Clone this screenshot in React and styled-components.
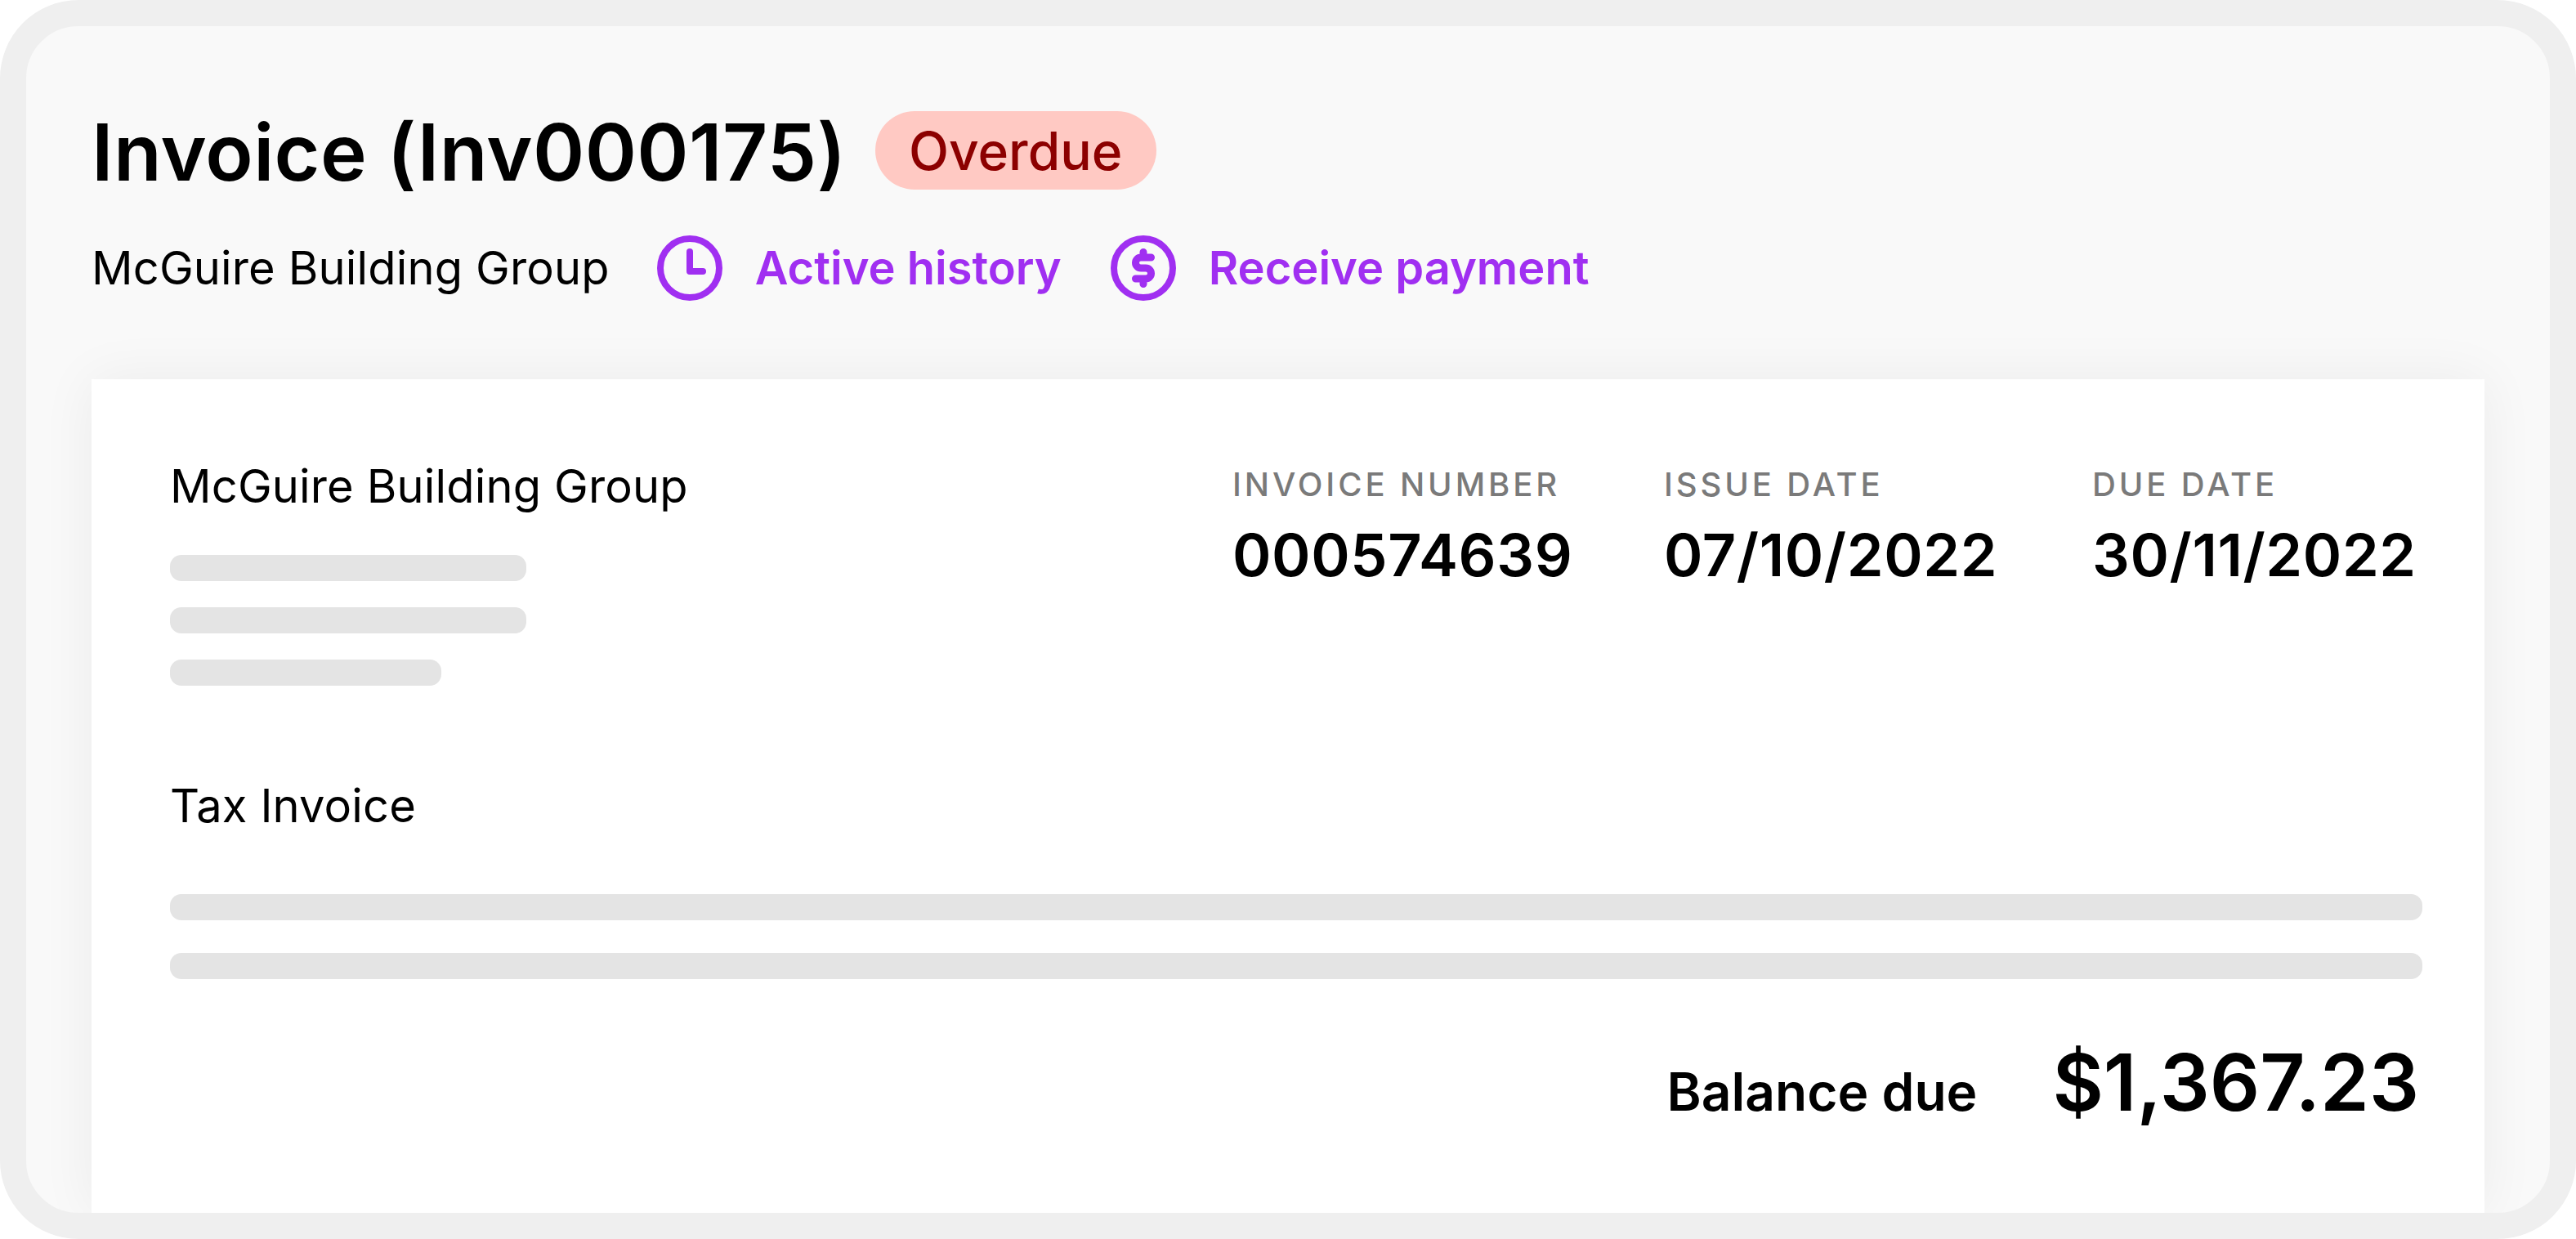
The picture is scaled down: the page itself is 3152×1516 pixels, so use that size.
import React from "react";
import styled, { createGlobalStyle } from "styled-components";

const Global = createGlobalStyle`
  html, body { margin: 0; padding: 0; background: #fff; }
  body { font-family: Inter, "Liberation Sans", sans-serif; color: #000; }
`;

const Frame = styled.div`
  width: 3152px;
  height: 1516px;
  box-sizing: border-box;
  border: 32px solid #efefef;
  border-radius: 96px;
  background: #f9f9f9;
  overflow: hidden;
  padding: 104px 80px 0;
  display: flex;
  flex-direction: column;
`;
const TitleRow = styled.div`
  display: flex;
  align-items: center;
  gap: 35px;
  height: 96px;
`;
const Title = styled.h1`
  margin: 0;
  padding-top: 4px;
  font-size: 96px;
  line-height: 96px;
  font-weight: 600;
  letter-spacing: 0.35px;
`;
const Badge = styled.span`
  display: inline-flex;
  align-items: center;
  justify-content: center;
  width: 344px;
  height: 96px;
  border-radius: 48px;
  background: #ffc9c3;
  color: #8c0000;
  font-size: 64px;
  font-weight: 500;
`;
const SubRow = styled.div`
  display: flex;
  align-items: center;
  margin-top: 56px;
  height: 80px;
`;
const Company = styled.span`
  font-size: 56px;
  font-weight: 400;
  letter-spacing: 0.15px;
  margin-right: 58px;
`;
const Action = styled.a`
  display: flex;
  align-items: center;
  gap: 40px;
  margin-right: 60px;
  font-size: 56px;
  font-weight: 600;
  color: #a02ff1;
`;
const Sheet = styled.div`
  flex: 1;
  margin-top: 96px;
  background: #fff;
  box-shadow: 0 0 64px rgba(0, 0, 0, 0.06);
  padding: 99px 76px 0 96px;
  display: flex;
  flex-direction: column;
`;
const Top = styled.div`
  display: flex;
  justify-content: space-between;
`;
const Sender = styled.div`
  display: flex;
  flex-direction: column;
`;
const SenderName = styled.div`
  font-size: 56px;
  line-height: 64px;
  letter-spacing: 0.15px;
  margin-bottom: 52px;
`;
const Bar = styled.div`
  width: ${(p) => p.$w}px;
  height: 32px;
  border-radius: 14px;
  background: #e4e4e4;
  margin-bottom: ${(p) => p.$mb}px;
`;
const Meta = styled.div`
  display: flex;
  margin-top: 6px;
  margin-right: 6px;
`;
const MetaCol = styled.div`
  width: ${(p) => p.$w}px;
  display: flex;
  flex-direction: column;
`;
const MetaLabel = styled.div`
  font-size: 40px;
  line-height: 48px;
  font-weight: 500;
  letter-spacing: 3.9px;
  color: #7a7a7a;
  margin-bottom: 20px;
`;
const MetaValue = styled.div`
  font-size: 72px;
  line-height: 84px;
  font-weight: 600;
  letter-spacing: 0.6px;
`;
const Tax = styled.div`
  font-size: 56px;
  line-height: 64px;
  margin-top: 115px;
  margin-bottom: 76px;
  letter-spacing: 0.15px;
`;
const Wide = styled.div`
  height: 32px;
  border-radius: 14px;
  background: #e4e4e4;
  margin-bottom: 40px;
`;
const BalanceRow = styled.div`
  display: flex;
  justify-content: flex-end;
  align-items: baseline;
  gap: 92px;
  margin-top: 28px;
  padding-right: 4px;
`;
const BalanceLabel = styled.span`
  font-size: 64px;
  font-weight: 600;
`;
const BalanceValue = styled.span`
  font-size: 96px;
  font-weight: 600;
`;

const ClockIcon = () => (
  <svg width="80" height="80" viewBox="0 0 80 80" fill="none" stroke="#a02ff1" strokeWidth="8" strokeLinecap="round" strokeLinejoin="round">
    <circle cx="40" cy="40" r="36" />
    <path d="M40 20V44H56" />
  </svg>
);
const DollarIcon = () => (
  <svg width="80" height="80" viewBox="0 0 80 80" fill="none" stroke="#a02ff1" strokeWidth="8" strokeLinecap="round" strokeLinejoin="round">
    <circle cx="40" cy="40" r="36" />
    <path strokeWidth="9" d="M49.5 27H37a6.5 6.5 0 0 0 0 13h6a6.5 6.5 0 0 1 0 13H30.5M40 20.5V27M40 53V59.5" />
  </svg>
);

export default function App() {
  return (
    <>
      <Global />
      <Frame>
        <TitleRow>
          <Title>Invoice (Inv000175)</Title>
          <Badge>Overdue</Badge>
        </TitleRow>
        <SubRow>
          <Company>McGuire Building Group</Company>
          <Action><ClockIcon />Active history</Action>
          <Action><DollarIcon />Receive payment</Action>
        </SubRow>
        <Sheet>
          <Top>
            <Sender>
              <SenderName>McGuire Building Group</SenderName>
              <Bar $w={436} $mb={32} />
              <Bar $w={436} $mb={32} />
              <Bar $w={332} $mb={0} />
            </Sender>
            <Meta>
              <MetaCol $w={528}><MetaLabel>INVOICE NUMBER</MetaLabel><MetaValue>000574639</MetaValue></MetaCol>
              <MetaCol $w={524}><MetaLabel>ISSUE DATE</MetaLabel><MetaValue>07/10/2022</MetaValue></MetaCol>
              <MetaCol $w={398}><MetaLabel>DUE DATE</MetaLabel><MetaValue>30/11/2022</MetaValue></MetaCol>
            </Meta>
          </Top>
          <Tax>Tax Invoice</Tax>
          <Wide />
          <Wide />
          <BalanceRow>
            <BalanceLabel>Balance due</BalanceLabel>
            <BalanceValue>$1,367.23</BalanceValue>
          </BalanceRow>
        </Sheet>
      </Frame>
    </>
  );
}
